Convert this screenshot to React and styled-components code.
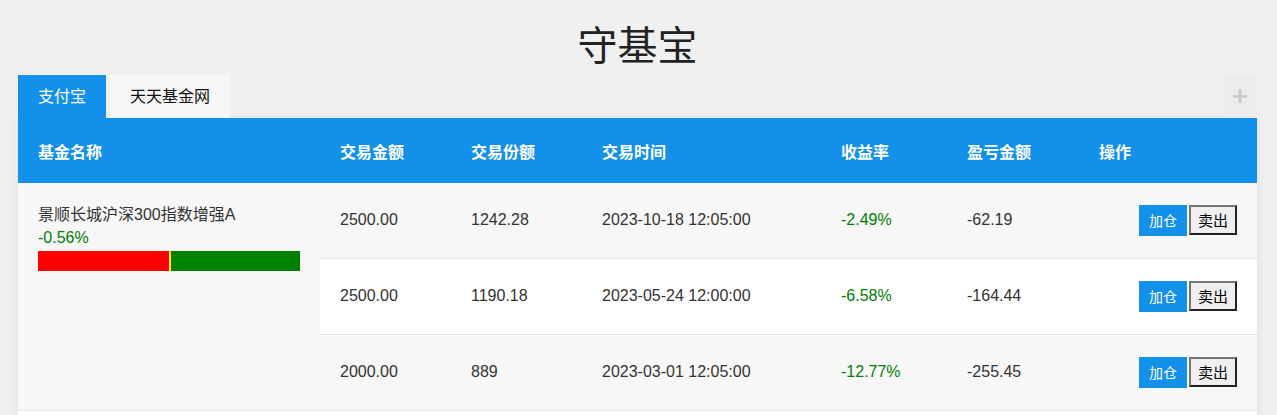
import React from "react";
import styled, { createGlobalStyle } from "styled-components";

const GlobalStyle = createGlobalStyle`
  body {
    margin: 0;
    background: #f0f0f0;
    font-family: "Liberation Sans", Arial, "Noto Sans CJK SC", sans-serif;
    color: #333;
  }
`;

const columns = [
  { title: "基金名称", width: 302 },
  { title: "交易金额", width: 131 },
  { title: "交易份额", width: 131 },
  { title: "交易时间", width: 239 },
  { title: "收益率", width: 126 },
  { title: "盈亏金额", width: 132 },
  { title: "操作", width: 178 },
];

const fund = {
  name: "景顺长城沪深300指数增强A",
  rate: "-0.56%",
  redWidth: 131,
  trades: [
    { amount: "2500.00", share: "1242.28", time: "2023-10-18 12:05:00", rate: "-2.49%", profit: "-62.19" },
    { amount: "2500.00", share: "1190.18", time: "2023-05-24 12:00:00", rate: "-6.58%", profit: "-164.44" },
    { amount: "2000.00", share: "889", time: "2023-03-01 12:05:00", rate: "-12.77%", profit: "-255.45" },
  ],
};

export default function App() {
  return (
    <Page>
      <GlobalStyle />
      <Title>守基宝</Title>
      <TabBar>
        <Tab $active>支付宝</Tab>
        <Tab>天天基金网</Tab>
        <AddButton>+</AddButton>
      </TabBar>
      <Table>
        <colgroup>
          {columns.map((c) => (
            <col key={c.title} style={{ width: c.width }} />
          ))}
        </colgroup>
        <thead>
          <tr>
            {columns.map((c) => (
              <Th key={c.title}>{c.title}</Th>
            ))}
          </tr>
        </thead>
        <tbody>
          {fund.trades.map((t, i) => (
            <Row key={t.time} $odd={i % 2 === 0}>
              {i === 0 && (
                <FundCell rowSpan={fund.trades.length}>
                  <FundName>{fund.name}</FundName>
                  <FundRate>{fund.rate}</FundRate>
                  <Bar>
                    <BarPart $color="#ff0000" style={{ width: fund.redWidth }} />
                    <BarPart $color="#ffee00" style={{ width: 2 }} />
                    <BarPart $color="#008000" style={{ flex: 1 }} />
                  </Bar>
                </FundCell>
              )}
              <Td>{t.amount}</Td>
              <Td>{t.share}</Td>
              <Td>{t.time}</Td>
              <Td $green>{t.rate}</Td>
              <Td>{t.profit}</Td>
              <Td>
                <Actions>
                  <AddPos>加仓</AddPos>
                  <Sell>卖出</Sell>
                </Actions>
              </Td>
            </Row>
          ))}
          <Row>
            <Td colSpan={7} />
          </Row>
        </tbody>
      </Table>
    </Page>
  );
}

const Page = styled.div`
  padding: 0 20px 0 18px;
`;

const Title = styled.h1`
  margin: 0;
  padding-top: 23px;
  height: 52px;
  line-height: 40px;
  font-size: 40px;
  font-weight: normal;
  text-align: center;
  color: #222;
  font-family: "Noto Sans CJK SC", sans-serif;
`;

const TabBar = styled.div`
  display: flex;
  gap: 4px;
  height: 43px;
`;

const Tab = styled.div`
  padding: 0 20px;
  line-height: 43px;
  font-size: 16px;
  background: ${(p) => (p.$active ? "#1390e9" : "#f7f7f7")};
  color: ${(p) => (p.$active ? "#fff" : "#111")};
  cursor: pointer;
`;

const AddButton = styled.div`
  margin-left: auto;
  width: 34px;
  line-height: 42px;
  text-align: center;
  font-size: 22px;
  font-weight: bold;
  color: #c8c8c8;
  background: #ececec;
  font-family: "DejaVu Sans", sans-serif;
`;

const Table = styled.table`
  width: 1239px;
  table-layout: fixed;
  border-collapse: collapse;
  box-shadow: 0 0 10px rgba(0, 0, 0, 0.07);
  font-size: 16px;
`;

const Th = styled.th`
  height: 65px;
  padding: 0 20px;
  text-align: left;
  background: #1390e9;
  color: #fff;
  font-weight: bold;
  font-size: 16px;
`;

const Row = styled.tr`
  background: ${(p) => (p.$odd ? "#f7f7f7" : "#fff")};
`;

const Td = styled.td`
  height: 74px;
  padding: 0 20px 1px;
  border-bottom: 1px solid #e5e5e5;
  color: ${(p) => (p.$green ? "#008000" : "#333")};
  white-space: nowrap;
`;

const FundCell = styled.td`
  vertical-align: top;
  padding: 21px 20px 0;
  background: #f7f7f7;
  border-bottom: 1px solid #e5e5e5;
`;

const FundName = styled.div`
  line-height: 22px;
  color: #333;
  white-space: nowrap;
`;

const FundRate = styled.div`
  line-height: 23px;
  color: #008000;
`;

const Bar = styled.div`
  display: flex;
  height: 20px;
  margin-top: 2px;
  width: 262px;
`;

const BarPart = styled.div`
  height: 100%;
  background: ${(p) => p.$color};
`;

const Actions = styled.div`
  display: flex;
  justify-content: flex-end;
  gap: 2px;
`;

const AddPos = styled.button`
  width: 48px;
  height: 31px;
  border: none;
  background: #1390e9;
  color: #fff;
  font-size: 14px;
  font-family: inherit;
  cursor: pointer;
`;

const Sell = styled.button`
  width: 48px;
  height: 30px;
  border: 2px solid;
  border-color: #767676 #222 #222 #767676;
  background: #efefef;
  color: #000;
  font-size: 15px;
  font-family: inherit;
  cursor: pointer;
`;
